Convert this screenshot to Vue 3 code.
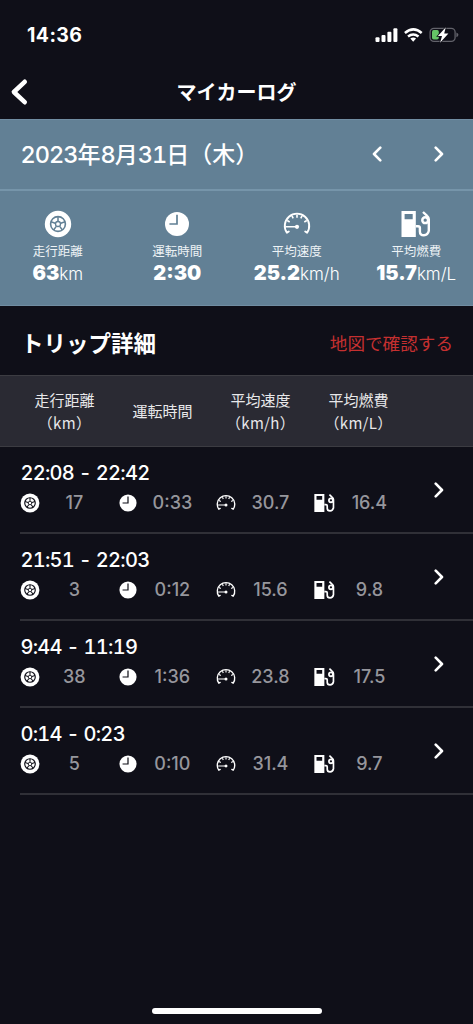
<script setup>
const stats = [
  { icon: 'wheel', label: '走行距離', value: '63', unit: 'km' },
  { icon: 'clock', label: '運転時間', value: '2:30', unit: '' },
  { icon: 'gauge', label: '平均速度', value: '25.2', unit: 'km/h' },
  { icon: 'pump', label: '平均燃費', value: '15.7', unit: 'km/L' },
]
const columns = [
  { label: '走行距離', unit: '（km）' },
  { label: '運転時間' },
  { label: '平均速度', unit: '（km/h）' },
  { label: '平均燃費', unit: '（km/L）' },
]
const icons = ['wheel', 'clock', 'gauge', 'pump']
const trips = [
  { time: '22:08 - 22:42', values: ['17', '0:33', '30.7', '16.4'] },
  { time: '21:51 - 22:03', values: ['3', '0:12', '15.6', '9.8'] },
  { time: '9:44 - 11:19', values: ['38', '1:36', '23.8', '17.5'] },
  { time: '0:14 - 0:23', values: ['5', '0:10', '31.4', '9.7'] },
]
</script>

<template>
  <div class="screen">
    <svg class="defs" width="0" height="0" aria-hidden="true">
      <symbol id="wheel" viewBox="0 0 28 28">
        <circle class="solid" cx="14" cy="14" r="13.2" />
        <circle class="cut" cx="14" cy="14" r="7.4" stroke-width="1.6" />
        <path class="cut" stroke-width="1.5" d="M14 6.5V11M7 11.8l4.2 1.4M21 11.8l-4.2 1.4M9.6 20l2.7-3.6M18.4 20l-2.7-3.6" />
        <circle class="cut" cx="14" cy="14" r="2.5" stroke-width="1.3" />
      </symbol>
      <symbol id="clock" viewBox="0 0 28 28">
        <circle class="solid" cx="14" cy="14" r="12" />
        <path class="cut" stroke-width="1.7" d="M14 4.8V14H6.4" />
      </symbol>
      <symbol id="gauge" viewBox="0 0 28 28">
        <path class="line" stroke-width="1.9" stroke-linecap="round" stroke-linejoin="round" d="M5.8 21.5L3.9 22.7A12.2 12.2 0 1 1 24.1 22.7L22.2 21.5" />
        <path class="line" stroke-width="1.6" d="M14 4.5v3.2M9 5.8l1.2 2.5M19 5.8l-1.2 2.5M4.2 10.5l2.5 1.5M23.8 10.5l-2.5 1.5M3 16.8H14" />
        <circle class="solid" cx="14" cy="16.8" r="2.1" />
      </symbol>
      <symbol id="pump" viewBox="0 0 30 28">
        <path class="solid" fill-rule="evenodd" d="M.5 1h14.3v26H.5zM3.6 4.1v5.2h8.1V4.1z" />
        <path class="line" stroke-width="2.4" d="M14.8 16.2h2.3q1.8 0 1.8 1.8v3.4q0 3.8 4 3.8t4.9-4.4V9.3q0-2.1-1.7-3.4L22 2" />
        <circle class="line" cx="24.2" cy="10.2" r="2.9" stroke-width="2.5" />
      </symbol>
      <symbol id="chevron" viewBox="0 0 10 16">
        <path class="line" stroke-width="2.6" stroke-linecap="round" stroke-linejoin="round" d="M1.7 1.7L8 8l-6.3 6.3" />
      </symbol>
    </svg>

    <div class="status">
      <span class="clock-time">14:36</span>
      <svg class="status-icons" width="84" height="18" viewBox="0 0 84 18">
        <g fill="#fff">
          <rect x="0.5" y="11.3" width="4" height="4.6" rx="1" />
          <rect x="6.5" y="9" width="4" height="6.9" rx="1" />
          <rect x="12.4" y="5.7" width="4" height="10.2" rx="1" />
          <rect x="18.4" y="2.2" width="4" height="13.7" rx="1" />
          <path d="M35.3 12.4q3-2 5.8 0L38.2 15.7z" />
        </g>
        <path d="M29.9 7q8.5-7.2 16.8 0M33 10.6q5.2-4.1 10.5 0" fill="none" stroke="#fff" stroke-width="2.5" />
        <rect x="55.1" y="2.3" width="25" height="13" rx="3.8" fill="none" stroke="#62626a" stroke-width="1.3" />
        <path d="M81.4 6.4q2 .7 2 2.4t-2 2.4z" fill="#62626a" />
        <rect x="57" y="4.1" width="6.8" height="9.4" rx="1.7" fill="#65c466" />
        <path d="M70.8 1.2l-7.9 8.8h4.1l-1.9 6.7 8.3-9.1h-4.2z" fill="#fff" stroke="#0f0f18" stroke-width="1.6" paint-order="stroke" />
      </svg>
    </div>

    <header class="nav">
      <svg class="back" width="18" height="28" viewBox="0 0 18 28">
        <path d="M14.7 3.8L3.9 14l10.8 10.2" fill="none" stroke="#fff" stroke-width="4.6" stroke-linecap="round" stroke-linejoin="round" />
      </svg>
      <h1>マイカーログ</h1>
    </header>

    <section class="summary">
      <div class="date-row">
        <span class="date"><b>2023</b>年<b>8</b>月<b>31</b>日（木）</span>
        <svg class="chev flip"><use href="#chevron" /></svg>
        <svg class="chev next"><use href="#chevron" /></svg>
      </div>
      <div class="stats">
        <div v-for="s in stats" :key="s.icon" class="stat">
          <svg class="stat-icon" :class="s.icon"><use :href="'#' + s.icon" /></svg>
          <span class="stat-label">{{ s.label }}</span>
          <span class="stat-value"><b>{{ s.value }}</b>{{ s.unit }}</span>
        </div>
      </div>
    </section>

    <div class="detail-head">
      <h2>トリップ詳細</h2>
      <a>地図で確認する</a>
    </div>

    <div class="columns">
      <div v-for="c in columns" :key="c.label" class="column">
        <span>{{ c.label }}</span>
        <span v-if="c.unit" class="unit">{{ c.unit }}</span>
      </div>
    </div>

    <ul class="trips">
      <li v-for="t in trips" :key="t.time" class="trip">
        <div class="trip-body">
          <div class="trip-time">{{ t.time }}</div>
          <div class="trip-values">
            <div v-for="(v, i) in t.values" :key="i" class="cell">
              <svg class="cell-icon" :class="icons[i]"><use :href="'#' + icons[i]" /></svg>
              <span>{{ v }}</span>
            </div>
          </div>
        </div>
        <svg class="chev"><use href="#chevron" /></svg>
      </li>
    </ul>

    <div class="home"></div>
  </div>
</template>

<style>
body {
  background: #0f0f18;
}
</style>

<style scoped>
.screen {
  --hole: #0f0f18;
  display: flex;
  flex-direction: column;
  box-sizing: border-box;
  width: 473px;
  height: 1024px;
  overflow: hidden;
  background: #0f0f18;
  color: #fff;
  font-family: 'Noto Sans CJK JP', sans-serif;
}
.defs {
  position: absolute;
}
.solid {
  fill: #fff;
}
.line {
  fill: none;
  stroke: #fff;
}
.cut {
  fill: none;
  stroke: var(--hole);
}
.status {
  display: flex;
  align-items: center;
  justify-content: space-between;
  height: 70px;
  padding: 0 14px 0 27px;
  box-sizing: border-box;
}
.clock-time {
  font: 700 19.5px/24px Inter, sans-serif;
  letter-spacing: 0.4px;
}
.nav {
  display: grid;
  grid-template-columns: 40px 1fr 40px;
  align-items: center;
  height: 49px;
  padding-bottom: 6px;
  box-sizing: border-box;
}
.back {
  margin-left: 10px;
}
h1 {
  margin: 0;
  text-align: center;
  font-size: 20px;
  line-height: 28px;
  font-weight: 700;
}
.summary {
  --hole: #628095;
  height: 187px;
  box-sizing: border-box;
  background: #628095;
  border-top: 1px solid #718da2;
  border-bottom: 1px solid #718da2;
}
.date-row {
  display: flex;
  align-items: center;
  height: 71px;
  padding: 0 29px 2px 20.5px;
  box-sizing: border-box;
  border-bottom: 2px solid #7695aa;
}
.date {
  flex: 1;
  white-space: nowrap;
  font-size: 23px;
  line-height: 32px;
  font-weight: 500;
}
.date b {
  font-family: Inter, sans-serif;
  font-weight: 500;
  font-size: 23.5px;
  font-feature-settings: 'tnum' 1;
  letter-spacing: -1px;
}
.chev {
  flex: none;
  width: 10px;
  height: 16px;
}
.flip {
  transform: scaleX(-1);
}
.next {
  margin-left: 52px;
}
.stats {
  display: grid;
  grid-template-columns: repeat(4, 119.5px);
  margin-left: -2px;
  padding-top: 19px;
}
.stat {
  display: flex;
  flex-direction: column;
  align-items: center;
}
.stat-icon {
  width: 28px;
  height: 28px;
}
.stat-icon.pump {
  width: 30px;
}
.stat-label {
  font-size: 12.5px;
  line-height: 18px;
  margin-top: 4px;
  color: #eef3f6;
}
.stat-value {
  font: 300 17px/24px Inter, sans-serif;
  margin-top: 1px;
  white-space: nowrap;
}
.stat-value b {
  font-size: 20px;
  font-weight: 900;
}
.detail-head {
  display: flex;
  align-items: center;
  justify-content: space-between;
  height: 69px;
  padding: 4px 20px 0 21px;
  box-sizing: border-box;
}
h2 {
  margin: -2px 0 0;
  font-size: 22.5px;
  line-height: 32px;
  font-weight: 700;
}
.detail-head a {
  color: #c53030;
  font-size: 17.6px;
  line-height: 26px;
}
.columns {
  display: grid;
  grid-template-columns: repeat(4, 98px);
  height: 72px;
  padding: 0 0 1px 15.5px;
  box-sizing: border-box;
  background: #2a2a33;
  border-top: 1px solid #3c3c42;
  border-bottom: 1px solid #3c3c42;
}
.column {
  display: flex;
  flex-direction: column;
  align-items: center;
  justify-content: center;
  font-size: 15px;
  line-height: 23px;
  color: #e8e8ea;
  white-space: nowrap;
}
.unit {
  font-feature-settings: 'halt' 1;
  letter-spacing: 0.3px;
}
.trips {
  list-style: none;
  margin: 0;
  padding: 0 0 0 20px;
}
.trip {
  display: flex;
  align-items: center;
  height: 87px;
  padding-right: 29px;
  box-sizing: border-box;
  border-bottom: 2px solid #303037;
}
.trip-body {
  flex: 1;
  padding: 0 0 4px 0.4px;
}
.trip-time {
  font: 500 20px/28px Inter, sans-serif;
  font-feature-settings: 'tnum' 1, 'calt' 0;
  letter-spacing: -0.7px;
}
.trip-values {
  display: grid;
  grid-template-columns: repeat(4, 98px);
  margin-top: 2px;
}
.cell {
  display: flex;
  align-items: center;
  height: 28px;
}
.cell-icon {
  flex: none;
  width: 20px;
  height: 20px;
}
.cell-icon.pump {
  width: 21px;
}
.cell span {
  width: 68px;
  text-align: center;
  font: 500 18px/28px Inter, sans-serif;
  color: #96969c;
}
.home {
  width: 170px;
  height: 6px;
  margin: auto auto 10px;
  border-radius: 3px;
  background: #fff;
}
</style>
